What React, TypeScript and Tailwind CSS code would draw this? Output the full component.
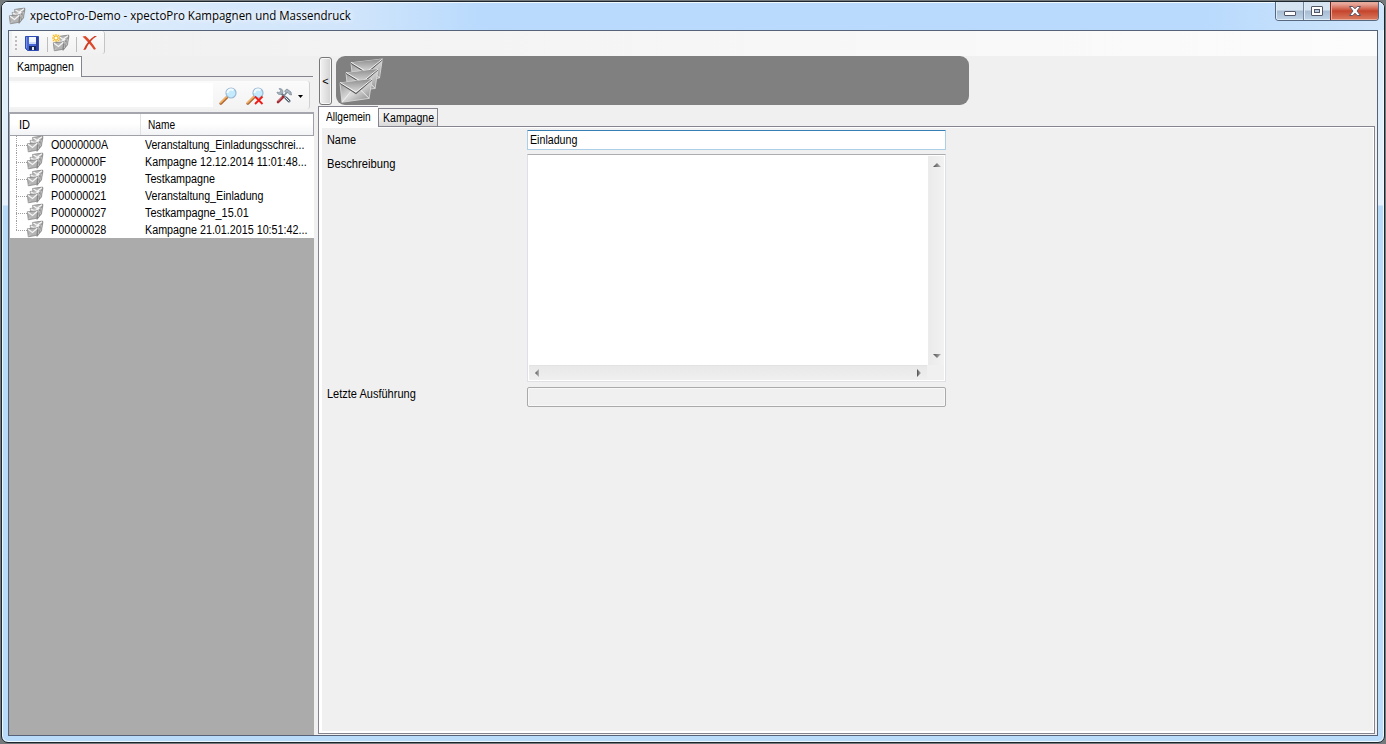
import { useLayoutEffect, useRef, type ReactNode } from "react";

/** A single-line label whose glyphs are condensed or widened to a given width. */
function Label({ children, w, title = false }: { children: string; w: number; title?: boolean }) {
  const ref = useRef<HTMLSpanElement>(null);
  useLayoutEffect(() => {
    const el = ref.current;
    if (el) el.style.transform = `scaleX(${w / el.offsetWidth})`;
  }, [w]);
  return (
    <span
      ref={ref}
      className={
        title
          ? "block w-max origin-left whitespace-pre font-['Open_Sans',sans-serif] text-[12px] leading-[16px] [text-shadow:0_0_6px_#fff,0_0_8px_#fff]"
          : "block w-max origin-left whitespace-pre font-['Liberation_Sans',sans-serif] text-[12px] leading-[14px]"
      }
    >
      {children}
    </span>
  );
}

function Envelope({ x, y, s }: { x: number; y: number; s: number }) {
  return (
    <g transform={`translate(${x} ${y}) scale(${s})`}>
      <path d="M0 4 33 0 30 20 2 24Z" fill="url(#paper)" stroke="#d9d9d9" strokeWidth=".9" />
      <path d="M2 24 12 12M30 20 21 11" stroke="#f0f0f0" strokeWidth="1" />
      <path d="M0 4 33 0 17 14Z" fill="url(#flap)" />
      <path d="M0 4.500 16.500 15 33 .5" fill="none" stroke="#5d5d5d" strokeWidth="1.200" />
      <path d="M0 3.500 16.500 13.500 33 0" fill="none" stroke="#f5f5f5" strokeWidth="1" />
    </g>
  );
}

function BigLetters() {
  return (
    <svg className="ml-[3px] mt-[2px] h-[46px] w-[46px]" viewBox="0 0 46 46">
      <defs>
        <linearGradient id="paper" x1="0" y1="0" x2="1" y2="1">
          <stop offset="0" stopColor="#8c8c8c" />
          <stop offset="0.5" stopColor="#dadada" />
          <stop offset="1" stopColor="#7c7c7c" />
        </linearGradient>
        <linearGradient id="flap" x1="0" y1="0" x2="0" y2="1">
          <stop offset="0" stopColor="#8d8d8d" />
          <stop offset="1" stopColor="#dcdcdc" />
        </linearGradient>
      </defs>
      <Envelope x={12} y={1} s={0.95} />
      <Envelope x={7} y={11} s={0.97} />
      <Envelope x={1} y={21} s={0.97} />
    </svg>
  );
}

function Letters({ star = false }: { star?: boolean }) {
  return (
    <svg className="h-4 w-4 shrink-0 overflow-visible" viewBox="0 0 16 16">
      <path d="M6 1.500 15.500 0 16 1 14.500 10 10 15.500 9 10Z" fill="#8a8a8a" stroke="#757575" strokeWidth=".5" />
      <path d="M5.500 1.500 15.500 .3 14 6 6 6Z" fill="#b9b9b9" stroke="#8a8a8a" strokeWidth=".6" />
      <path d="M3 4.500 13 3.300 12 9 4 9Z" fill="#c8c8c8" stroke="#858585" strokeWidth=".6" />
      <path d="m6.500 2 3.500 2.300L15 .8M4 5l3.500 2.200L12.500 4" fill="none" stroke="#f7f7f7" strokeWidth="1.100" />
      <path d="M.3 7.800 10.800 6.800 9.800 14.300 1.300 15.800Z" fill="#b4b4b4" stroke="#7b7b7b" strokeWidth=".7" />
      <path d="M1 8.300 5.500 11.500 10.300 7.300" fill="none" stroke="#f5f5f5" strokeWidth="1.200" />
      <path d="m1 15.500 3-3M11.300 13l1.200-6M13.300 10.500 14.700 4" fill="none" stroke="#d2d2d2" strokeWidth=".7" />
      {star && (
        <g>
          <path d="M-.5-.5h7v7h-7z" fill="#ffe592" />
          <path d="M3-1v8M-1 3h8M0 0l6 6M6 0 0 6" stroke="#f0b93c" strokeWidth="1" />
          <path d="M2 2h2v2H2z" fill="#fff" />
        </g>
      )}
    </svg>
  );
}

function Floppy() {
  return (
    <svg className="h-[15px] w-[15px]" viewBox="0 0 15 15">
      <path d="M.5.5h13v14H2.500l-2-2z" fill="#4a68d4" stroke="#2f4cb4" />
      <path d="M11 1h2v13h-2z" fill="#2c3f9c" />
      <path d="M4 1h7v7H4z" fill="#f1f6ff" />
      <path d="M4 6h7v2H4z" fill="#cfdcf8" />
      <path d="M4 10h7v4H4z" fill="#17265c" />
      <path d="M7 11h2v3H7z" fill="#dfe8ee" />
      <path d="M1 1h1v11H1z" fill="#7a91e9" />
    </svg>
  );
}

function Delete() {
  return (
    <svg className="h-4 w-4" viewBox="0 0 16 16">
      <path d="M.5 1.500 3.500 1C7 4 11 9 14 14l-2 .8C8.500 9.500 4.500 5.500 .5 1.500Z" fill="#dd4a2c" />
      <path d="M15 1C10 4 6 9 3.800 14.500L1.300 15C4 8.500 8 4 12.500 1Z" fill="#d13a20" />
    </svg>
  );
}

function Magnifier({ clear = false }: { clear?: boolean }) {
  return (
    <svg className="h-[18px] w-[18px]" viewBox="0 0 18 18">
      <path d="m1.800 16.500 6-6" stroke="#b0693a" strokeWidth="2.800" strokeLinecap="round" />
      <path d="m1.500 15.800 6-6" stroke="#f5b45c" strokeWidth="1.500" strokeLinecap="round" />
      <circle cx="12" cy="6" r="5" fill="#c3eafd" stroke="#9db9d3" strokeWidth="1.200" />
      <path d="M8.500 6a3.500 3.500 0 0 1 6-2.500" fill="none" stroke="#f2fbff" strokeWidth="2" />
      {clear && <path d="m9 9.500 7.500 7.500m0-7.500L9 17" stroke="#ee1c18" strokeWidth="1.900" />}
    </svg>
  );
}

function Tools() {
  return (
    <svg className="h-4 w-4" viewBox="0 0 16 16">
      <path d="m5 5 9 9" stroke="#6a7987" strokeWidth="2.200" />
      <path d="M1 4 3.500 4.700 4.700 2.500 3 .7C6-.1 7.800 3 6.500 5.500 4.500 7.500 1 6.500 1 4Z" fill="#a2b1be" stroke="#74838f" strokeWidth=".6" />
      <path d="m13.500 13.500-4-4" stroke="#53616f" strokeWidth="3" />
      <path d="m13.300 13.300-4-4" stroke="#e4ebf1" strokeWidth="1" />
      <path d="m7 9 4-5" stroke="#7c8b98" strokeWidth="1.500" />
      <path d="M8.500 3 11 1l4 3 .5 3-2-.5-1.500-2-1.500.5Z" fill="#a8b6c2" stroke="#687784" strokeWidth=".6" />
      <path d="m2 14 5-5" stroke="#9f2831" strokeWidth="2.600" strokeLinecap="round" />
      <path d="m2 13.300 4-4" stroke="#e29595" strokeWidth=".8" />
    </svg>
  );
}

function Arrow({ dir }: { dir: "up" | "down" | "left" | "right" }) {
  const d = {
    up: "M0 6 4 2l4 4z",
    down: "M0 2h8L4 6z",
    left: "M6 0v8L2 4z",
    right: "M2 0v8l4-4z",
  }[dir];
  return (
    <svg className="h-2 w-2" viewBox="0 0 8 8">
      <defs>
        <linearGradient id={`arrow-${dir}`}>
          <stop offset="0" stopColor="#4e4e4e" />
          <stop offset="1" stopColor="#b5b5b5" />
        </linearGradient>
      </defs>
      <path d={d} fill={`url(#arrow-${dir})`} />
    </svg>
  );
}

function TitleBar() {
  return (
    <header className="flex h-[28px] shrink-0 justify-between">
      <div className="flex pl-[7px] pt-[6px]">
        <Letters />
        <div className="ml-[5px]">
          <Label w={321} title>
            xpectoPro-Demo - xpectoPro Kampagnen und Massendruck
          </Label>
        </div>
      </div>
      <div className="mr-[5px] flex h-[19px] w-[104px] overflow-hidden rounded-b-[4px] border border-t-0 border-[#56687d]">
        <div className="flex w-[28px] items-center justify-center border-r border-[#72859a] bg-linear-to-b from-[#d6e3f1] from-45% via-[#a7bbd2] via-50% to-[#c1d5e9] pt-[4px] shadow-[inset_1px_-1px_0_#dfecf7]">
          <svg className="h-[5px] w-3" viewBox="0 0 12 5">
            <rect x=".5" y=".5" width="11" height="4" rx=".5" fill="#fff" stroke="#535666" />
          </svg>
        </div>
        <div className="flex w-[26px] items-center justify-center bg-linear-to-b from-[#d6e3f1] from-45% via-[#a7bbd2] via-50% to-[#c1d5e9] shadow-[inset_1px_-1px_0_#dfecf7]">
          <svg className="h-[10px] w-3" viewBox="0 0 12 10">
            <rect x=".5" y=".5" width="11" height="9" rx=".5" fill="#fff" stroke="#535666" />
            <rect x="3.500" y="3.500" width="5" height="3" fill="#b9cbe0" stroke="#535666" />
          </svg>
        </div>
        <div className="flex flex-1 items-center justify-center border-l border-[#722820] bg-linear-to-b from-[#e7a89c] from-10% via-[#c5442c] via-50% to-[#d87a60] shadow-[inset_1px_-1px_0_#eaa999]">
          <svg className="h-[10px] w-3" viewBox="0 0 12 10">
            <path
              d="M.5.5h3.300L6 2.800 8.200.5h3.300L8 5l3.500 4.500H8.200L6 7.200 3.800 9.500H.5L4 5z"
              fill="#fff"
              stroke="#5c5464"
            />
          </svg>
        </div>
      </div>
    </header>
  );
}

function Toolbar() {
  return (
    <div className="flex h-[25px] shrink-0 bg-linear-to-r from-[#f0f0f0] to-[#fcfcfc]">
      <div className="ml-[3px] flex h-[23px] w-[93px] items-center rounded-r-[3px] border-r border-[#c4c4c4] bg-linear-to-b from-[#fbfbfb] to-[#f1f1f1]">
        <div className="ml-[3px] flex flex-col gap-[2px]">
          {[0, 1, 2, 3].map((n) => (
            <i key={n} className="h-[2px] w-[2px] bg-[#bdbdbd]" />
          ))}
        </div>
        <div className="ml-2 mt-px">
          <Floppy />
        </div>
        <i className="ml-[7px] mt-1 h-[15px] w-px bg-[#bdbdbd]" />
        <div className="ml-[5px]">
          <Letters star />
        </div>
        <i className="ml-[7px] mt-1 h-[15px] w-px bg-[#bdbdbd]" />
        <div className="ml-[5px] mt-px">
          <Delete />
        </div>
      </div>
    </div>
  );
}

const campaigns = [
  { id: "O0000000A", idW: 57, name: "Veranstaltung_Einladungsschrei...", w: 159 },
  { id: "P0000000F", idW: 55, name: "Kampagne 12.12.2014 11:01:48...", w: 162 },
  { id: "P00000019", idW: 55, name: "Testkampagne", w: 70 },
  { id: "P00000021", idW: 55, name: "Veranstaltung_Einladung", w: 118 },
  { id: "P00000027", idW: 55, name: "Testkampagne_15.01", w: 104 },
  { id: "P00000028", idW: 55, name: "Kampagne 21.01.2015 10:51:42...", w: 162 },
];

function Sidebar() {
  return (
    <aside className="flex w-[305px] shrink-0 flex-col">
      <div className="flex h-[21px] shrink-0">
        <div className="w-[73px] border-r border-t border-[#85858f] bg-white pl-[8px] pt-[3px]">
          <Label w={57}>Kampagnen</Label>
        </div>
        <div className="w-[231px] border-b border-[#85858f]" />
      </div>
      <div className="mt-1 flex h-[28px] w-[301px] shrink-0 items-center rounded-r-[3px] border-r border-[#d0d0d0] bg-linear-to-b from-[#fbfbfb] to-[#f3f3f3]">
        <div className="ml-px h-6 w-[203px] bg-white" />
        <div className="ml-[6px] mt-[2px]">
          <Magnifier />
        </div>
        <div className="ml-[9px] mt-[2px]">
          <Magnifier clear />
        </div>
        <div className="ml-[12px] mt-[2px]">
          <Tools />
        </div>
        <svg className="ml-[6px] mt-[2px] h-[3px] w-[5px]" viewBox="0 0 5 3">
          <path d="M0 0h5L2.500 3z" />
        </svg>
      </div>
      <div className="mt-[3px] flex flex-1 flex-col border-l border-t-2 border-[#a5a5ad] bg-[#ababab]">
        <div className="flex h-[22px] shrink-0 border-b border-r border-[#a0a0a8] bg-linear-to-b from-white from-45% to-[#f2f3f5]">
          <div className="w-[130px] pl-[9px] pt-[4px]">
            <Label w={11}>ID</Label>
          </div>
          <div className="border-l border-[#dfe1e6] pl-[7px] pt-[4px]">
            <Label w={27}>Name</Label>
          </div>
        </div>
        <ul className="bg-white">
          {campaigns.map((c, i) => (
            <li key={c.id} className="flex h-[17px]">
              <div className="ml-[6px] flex w-[11px] shrink-0 flex-col">
                <i className="h-[9px] w-px border-l border-dotted border-[#a0a0a0]" />
                <i className="h-px w-[11px] border-t border-dotted border-[#a0a0a0]" />
                {i < campaigns.length - 1 && (
                  <i className="h-[7px] w-px border-l border-dotted border-[#a0a0a0]" />
                )}
              </div>
              <Letters />
              <div className="ml-[8px] w-[94px] shrink-0 pt-[2px]">
                <Label w={c.idW}>{c.id}</Label>
              </div>
              <div className="w-[168px] pt-[2px]">
                <Label w={c.w}>{c.name}</Label>
              </div>
            </li>
          ))}
        </ul>
      </div>
    </aside>
  );
}

function Row({ label, w, className, children }: { label: string; w: number; className: string; children: ReactNode }) {
  return (
    <div className={className}>
      <div className="w-[200px]">
        <Label w={w}>{label}</Label>
      </div>
      {children}
    </div>
  );
}

function Details() {
  return (
    <main className="ml-[4px] flex flex-1 flex-col">
      <div className="flex h-[50px] shrink-0">
        <button className="ml-px mt-px flex h-[48px] w-[13px] items-center justify-center rounded-[3px] border border-[#777] bg-linear-to-r from-[#f3f3f3] to-[#d2d2d2] font-['Liberation_Sans',sans-serif] text-[11px] shadow-[inset_0_0_0_1px_#f8f8f8]">
          &lt;
        </button>
        <div className="ml-[4px] h-[49px] w-[633px] rounded-[9px] bg-[#808080]">
          <BigLetters />
        </div>
      </div>
      <nav className="flex h-[20px] shrink-0">
        <div className="w-[60px] border-l border-t border-[#85858f] bg-white pl-[7px] pt-[3px]">
          <Label w={45}>Allgemein</Label>
        </div>
        <div className="mt-[2px] w-[60px] border border-b-0 border-[#85858f] bg-linear-to-b from-[#f3f3f3] from-45% to-[#d8d8d8] pl-[4px] pt-[2px]">
          <Label w={51}>Kampagne</Label>
        </div>
      </nav>
      <div className="flex">
        <i className="h-px w-px bg-[#85858f]" />
        <i className="h-px w-[59px] bg-white" />
        <i className="h-px w-[997px] bg-[#85858f]" />
      </div>
      <section className="mb-px mr-[2px] flex-1 border border-t-0 border-[#85858f] bg-white pb-[2px] pl-[3px] pr-px pt-px">
        <div className="h-full bg-[#f0f0f0] pl-[5px] pt-[2px]">
          <Row label="Name" w={29} className="flex h-6 *:first:pt-[3px]">
            <div className="h-[20px] w-[419px] rounded-[1px] border border-[#abcfe7] border-t-[#367fb5] bg-white pl-[2px] pt-[2px]">
              <Label w={47}>Einladung</Label>
            </div>
          </Row>
          <Row label="Beschreibung" w={68} className="flex h-[233px] *:first:pt-[3px]">
            <div className="flex h-[228px] w-[419px] flex-col border border-[#dfe0e6] border-t-[#abadb3] bg-white p-px">
              <div className="flex h-[209px]">
                <div className="w-[399px] bg-white" />
                <div className="flex flex-1 flex-col items-center justify-between border-l border-[#ececec] bg-linear-to-r from-[#ebebeb] to-[#f2f2f2] pb-[5px] pt-[5px]">
                  <Arrow dir="up" />
                  <Arrow dir="down" />
                </div>
              </div>
              <div className="flex flex-1 bg-[#f0f0f0]">
                <div className="flex w-[398px] items-center justify-between border-t border-[#e3e3e3] bg-linear-to-b from-[#e8e8e8] to-[#efefef] px-[4px] pb-px">
                  <Arrow dir="left" />
                  <Arrow dir="right" />
                </div>
              </div>
            </div>
          </Row>
          <Row label="Letzte Ausführung" w={89} className="flex h-5">
            <div className="h-[20px] w-[419px] rounded-[2px] border border-[#aaaaaa] shadow-[inset_0_0_0_1px_#f8f8f8]" />
          </Row>
        </div>
      </section>
    </main>
  );
}

export default function App() {
  return (
    <div className="h-[744px] w-[1386px] overflow-hidden bg-[#74797c] pl-px pt-px text-black">
      <div className="flex h-[742px] w-[1384px] flex-col rounded-[7px] border border-[#1d252d] bg-[linear-gradient(to_bottom,#dcebfa_0,#e4f0fb_203px,#b7daf9_204px,#b9dcfb_100%)] shadow-[inset_0_0_0_1px_#eef8ff]">
        <div className="flex h-full flex-col rounded-t-[6px] bg-[linear-gradient(to_right,#e0eefb_0,#d0e5fb_350px,#b9dafd_480px,#b9dafd_1200px,#cfe5fb_100%)] bg-[length:100%_28px] bg-no-repeat shadow-[inset_0_1px_0_#f1f9ff]">
          <TitleBar />
          <div className="ml-[6px] flex h-[706px] w-[1370px] flex-col border border-[#566277] bg-[#f0f0f0]">
            <Toolbar />
            <div className="flex min-h-0 flex-1">
              <Sidebar />
              <Details />
            </div>
          </div>
        </div>
      </div>
    </div>
  );
}
